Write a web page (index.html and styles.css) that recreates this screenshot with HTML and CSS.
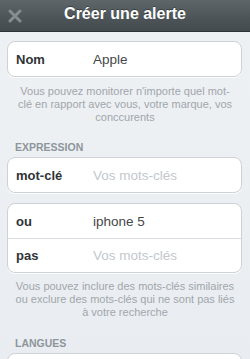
FILE: index.html
```html
<!DOCTYPE html>
<html lang="fr">
<head>
<meta charset="utf-8">
<title>Créer une alerte</title>
<link rel="stylesheet" href="styles.css">
</head>
<body>
<header class="topbar">
  <span class="close">
    <svg width="14" height="14" viewBox="0 0 14 14"><path d="M2 2 L12 12 M12 2 L2 12" stroke="#868d8f" stroke-width="3" stroke-linecap="round" fill="none"/></svg>
  </span>
  <h1 class="title">Créer une alerte</h1>
</header>
<main class="content">
  <div class="card">
    <div class="row"><span class="label">Nom</span><span class="value">Apple</span></div>
  </div>
  <p class="help">Vous pouvez monitorer n'importe quel mot-clé en rapport avec vous, votre marque, vos conccurents</p>

  <div class="section">EXPRESSION</div>
  <div class="card">
    <div class="row"><span class="label">mot-clé</span><span class="value placeholder">Vos mots-clés</span></div>
  </div>
  <div class="card card-gap">
    <div class="row"><span class="label">ou</span><span class="value">iphone 5</span></div>
    <div class="row row-split"><span class="label">pas</span><span class="value placeholder">Vos mots-clés</span></div>
  </div>
  <p class="help help2">Vous pouvez inclure des mots-clés similaires ou exclure des mots-clés qui ne sont pas liés à votre recherche</p>

  <div class="section section2">LANGUES</div>
  <div class="card">
    <div class="row"><span class="label">&nbsp;</span></div>
  </div>
</main>
</body>
</html>
```
FILE: styles.css
```css
* { box-sizing: border-box; }
html, body { margin: 0; padding: 0; }
body {
  width: 250px;
  height: 359px;
  overflow: hidden;
  font-family: "Liberation Sans", Arial, sans-serif;
  background: linear-gradient(180deg, #eef1f4 0%, #e9edf1 100%);
}
.topbar {
  position: relative;
  height: 32px;
  display: flex;
  align-items: center;
  justify-content: center;
  padding-bottom: 3px;
  background: linear-gradient(180deg, #5e666a 0%, #4c5457 60%, #444b4e 100%);
  border-bottom: 1px solid #2e3437;
}
.close {
  position: absolute;
  left: 8px;
  top: 9px;
  display: flex;
}
.title {
  margin: 0;
  font-size: 16px;
  font-weight: bold;
  color: #ffffff;
  text-shadow: 0 -1px 0 rgba(0,0,0,0.35);
}
.content {
  padding: 9px 8px 0 7px;
}
.card {
  background: #ffffff;
  border: 1px solid #cdd2d7;
  border-radius: 8px;
  box-shadow: 0 1px 0 rgba(255,255,255,0.8);
}
.card-gap { margin-top: 10px; }
.row {
  height: 34px;
  display: flex;
  align-items: center;
  padding-left: 8px;
}
.row-split { border-top: 1px solid #d9dde1; }
.label {
  width: 77px;
  font-size: 13px;
  font-weight: bold;
  color: #2f3336;
}
.value {
  font-size: 13.5px;
  color: #444849;
}
.placeholder { color: #c3c7cb; }
.help {
  margin: 8px 0 0 0;
  padding: 0 7px 0 8px;
  font-size: 11px;
  line-height: 13px;
  color: #a1a6ab;
  text-align: center;
}
.help2 { margin-top: 7px; }
.section {
  margin: 16px 0 3px 8px;
  font-size: 10.5px;
  font-weight: bold;
  line-height: 14px;
  color: #8e959b;
}
.section2 { margin-top: 17px; }
```
